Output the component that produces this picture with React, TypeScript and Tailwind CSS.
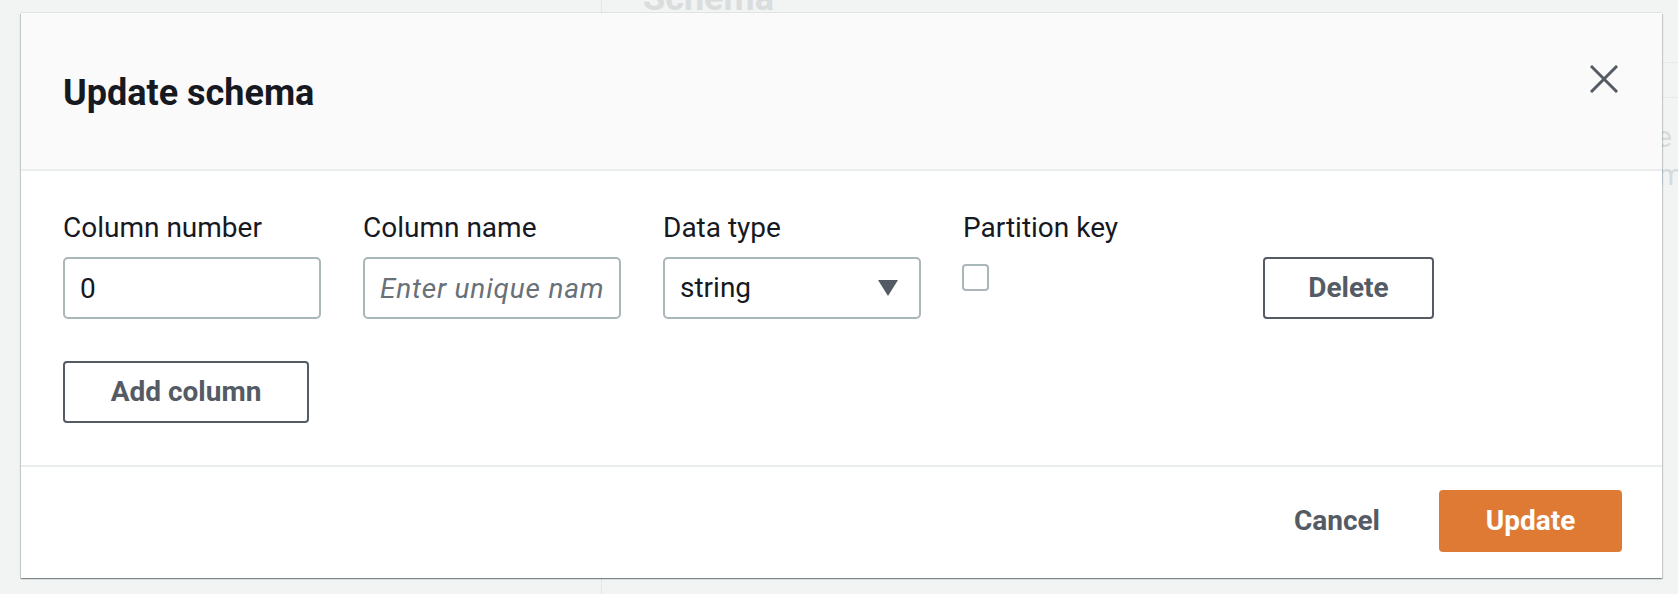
import React, { useState } from 'react';

const labelClass = 'h-[40px] leading-[40px] text-[28px] text-[#16191f] mb-[9px] whitespace-nowrap';
const inputClass =
  'w-full h-[62px] px-[15px] border-2 border-[#aab7b8] rounded-[5px] bg-white text-[28px] text-[#16191f] outline-none placeholder:italic placeholder:tracking-[0.8px] placeholder:text-[#687078]';
const outlineButton =
  'h-[62px] border-2 border-[#545b64] rounded-[4px] bg-white text-[28px] font-bold text-[#545b64] flex items-center justify-center';

const CloseIcon = () => (
  <svg width="28" height="28" viewBox="0 0 28 28" fill="none">
    <path d="M2 2 L26 26 M26 2 L2 26" stroke="#545b64" strokeWidth="3" strokeLinecap="square" />
  </svg>
);

const CaretIcon = () => (
  <svg width="20" height="16" viewBox="0 0 20 16">
    <path d="M0 0 H20 L10 16 Z" fill="#545b64" />
  </svg>
);

// the console page that sits behind the dialog
const BackgroundPage = () => (
  <div className="flex h-full">
    <div className="w-[602px] shrink-0 border-r border-[#e3e6e6]" />
    <div className="flex-1 pl-[41px]">
      <h2 className="-mt-[24px] h-[44px] leading-[44px] text-[36px] font-bold text-[#d9dddd]">Schema</h2>
      <div className="mt-[42px] h-[35px] border-t border-[#e6e9e9]" />
      <div className="border-t border-[#e6e9e9] pt-[20px] flex flex-col items-end text-[30px] leading-[38px] text-[#d5dbdb]">
        <span className="pr-[6px]">Type</span>
        <span className="-mr-[6px]">Form</span>
      </div>
    </div>
  </div>
);

const App: React.FC = () => {
  const [name, setName] = useState('');
  const [partition, setPartition] = useState(false);

  return (
    <div className="relative h-[594px] w-full overflow-hidden bg-[#f2f3f3] font-[Roboto,sans-serif]">
      <BackgroundPage />

      <div className="absolute left-[21px] top-[13px] w-[1641px] h-[565px] bg-white flex flex-col shadow-[0_1px_1px_0_rgba(0,28,36,0.3),1px_1px_1px_0_rgba(0,28,36,0.15),-1px_1px_1px_0_rgba(0,28,36,0.15),0_-1px_0_0_rgba(0,28,36,0.07)]">
        {/* Header */}
        <div className="h-[158px] shrink-0 bg-[#fafafa] border-b-2 border-[#eaeded] pl-[42px] pr-[44px] pt-[58px] flex items-start justify-between">
          <h1 className="h-[44px] leading-[44px] text-[36px] font-bold text-[#16191f]">Update schema</h1>
          <button className="-mt-[6px]" aria-label="Close">
            <CloseIcon />
          </button>
        </div>

        {/* Body */}
        <div className="px-[42px] pt-[37px] pb-[42px]">
          <div className="grid grid-cols-[repeat(4,258px)_171px] gap-x-[42px]">
            <div>
              <div className={labelClass}>Column number</div>
              <input className={inputClass} defaultValue="0" />
            </div>
            <div>
              <div className={labelClass}>Column name</div>
              <input
                className={inputClass}
                placeholder="Enter unique name"
                value={name}
                onChange={(e) => setName(e.target.value)}
              />
            </div>
            <div>
              <div className={labelClass}>Data type</div>
              <div className="h-[62px] pl-[15px] pr-[21px] border-2 border-[#aab7b8] rounded-[5px] bg-white flex items-center justify-between text-[28px] text-[#16191f]">
                <span>string</span>
                <CaretIcon />
              </div>
            </div>
            <div>
              <div className={labelClass}>Partition key</div>
              <button
                onClick={() => setPartition(!partition)}
                className="mt-[7px] -ml-[1px] w-[27px] h-[27px] border-2 border-[#aab7b8] rounded-[4px] bg-white"
                aria-label="Partition key"
              />
            </div>
            <div className="pt-[49px]">
              <button className={`${outlineButton} w-[171px]`}>Delete</button>
            </div>
          </div>

          <button className={`${outlineButton} w-[246px] mt-[42px]`}>Add column</button>
        </div>

        {/* Footer */}
        <div className="border-t-2 border-[#eaeded] pt-[23px] pr-[40px] flex items-center justify-end gap-[19px]">
          <button className="h-[62px] px-[40px] text-[28px] font-bold text-[#545b64]">Cancel</button>
          <button className="w-[183px] h-[62px] rounded-[4px] bg-[#de7a34] text-[28px] font-bold text-white">Update</button>
        </div>
      </div>
    </div>
  );
};

export default App;
